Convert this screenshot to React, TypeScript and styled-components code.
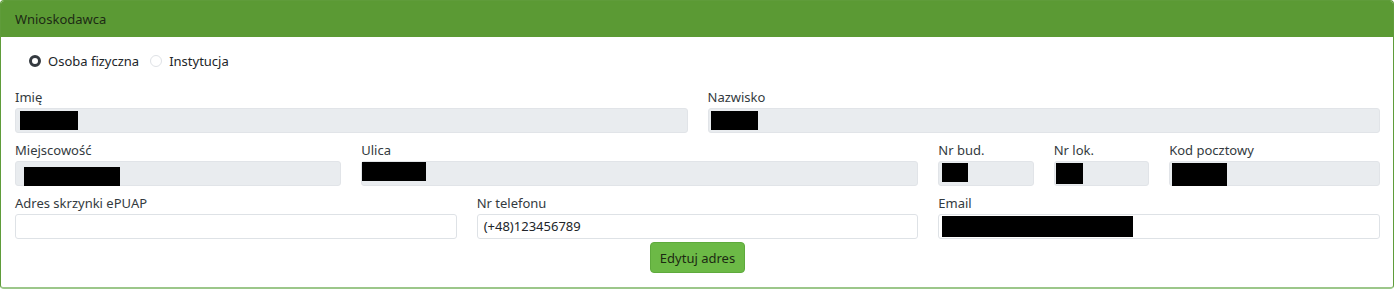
import styled, { createGlobalStyle } from "styled-components";

const GlobalStyle = createGlobalStyle`
  body {
    margin: 0;
    background: #ffffff;
    font-family: "Noto Sans", "Open Sans", sans-serif;
    font-size: 13px;
    color: #212529;
  }
`;

const Card = styled.section`
  width: 1394px;
  height: 289px;
  box-sizing: border-box;
  border: 1px solid #5f9c3a;
  border-bottom: 2px solid #9cc78a;
  border-radius: 4px;
  overflow: hidden;
  display: flex;
  flex-direction: column;
`;

const Header = styled.div`
  height: 36px;
  box-sizing: border-box;
  background: #5b9a34;
  padding: 0 14px;
  display: flex;
  align-items: center;
  color: #1d2a14;
  font-size: 13px;
`;

const Body = styled.div`
  padding: 13px 13px 0 14px;
  display: flex;
  flex-direction: column;
`;

const RadioRow = styled.div`
  display: flex;
  align-items: center;
  gap: 11px;
  padding-left: 14px;
  height: 22px;
  margin-bottom: 17px;
`;

const RadioOption = styled.label`
  display: flex;
  align-items: center;
  gap: 7px;
  color: #212529;
`;

const RadioDot = styled.span<{ $checked: boolean }>`
  width: 12px;
  height: 12px;
  box-sizing: border-box;
  border-radius: 50%;
  border: ${(p) => (p.$checked ? "3.5px solid #343a40" : "1px solid #dfe2e6")};
  background: #fff;
`;

const Grid = styled.div`
  display: grid;
  grid-template-columns: repeat(12, 1fr);
  column-gap: 20px;
  row-gap: 9px;
`;

const Field = styled.div<{ $span: number }>`
  grid-column: span ${(p) => p.$span};
  display: flex;
  flex-direction: column;
`;

const Label = styled.div`
  height: 19px;
  line-height: 17px;
  color: #333a40;
`;

const Input = styled.div<{ $readonly?: boolean }>`
  height: 25px;
  box-sizing: border-box;
  border: 1px solid ${(p) => (p.$readonly ? "#e1e4e8" : "#dee2e6")};
  border-radius: 3px;
  background: ${(p) => (p.$readonly ? "#e9ecef" : "#ffffff")};
  display: flex;
  align-items: flex-start;
  padding: 0 6px;
  line-height: 23px;
  color: #212529;
  position: relative;
`;

const Redacted = styled.span<{ $x: number; $y: number; $w: number; $h: number }>`
  position: absolute;
  left: ${(p) => p.$x}px;
  top: ${(p) => p.$y}px;
  width: ${(p) => p.$w}px;
  height: ${(p) => p.$h}px;
  background: #000;
`;

const ButtonRow = styled.div`
  display: flex;
  justify-content: center;
  margin-top: 3px;
`;

const Button = styled.button`
  width: 95px;
  height: 31px;
  border: 1px solid #5eaa3c;
  border-radius: 4px;
  background: #6cb946;
  color: #1c2a12;
  font-family: inherit;
  font-size: 13px;
  padding: 0;
`;

type Box = { x: number; y: number; w: number; h: number };

const fields: {
  label: string;
  span: number;
  readonly?: boolean;
  value?: string;
  box?: Box;
}[] = [
  { label: "Imię", span: 6, readonly: true, box: { x: 4, y: 2, w: 58, h: 19 } },
  { label: "Nazwisko", span: 6, readonly: true, box: { x: 2, y: 2, w: 47, h: 19 } },
  { label: "Miejscowość", span: 3, readonly: true, box: { x: 8, y: 5, w: 96, h: 19 } },
  { label: "Ulica", span: 5, readonly: true, box: { x: 0, y: 0, w: 64, h: 19 } },
  { label: "Nr bud.", span: 1, readonly: true, box: { x: 3, y: 1, w: 26, h: 19 } },
  { label: "Nr lok.", span: 1, readonly: true, box: { x: 1, y: 1, w: 27, h: 21 } },
  { label: "Kod pocztowy", span: 2, readonly: true, box: { x: 2, y: 1, w: 55, h: 23 } },
  { label: "Adres skrzynki ePUAP", span: 4 },
  { label: "Nr telefonu", span: 4, value: "(+48)123456789" },
  { label: "Email", span: 4, box: { x: 3, y: 1, w: 191, h: 21 } },
];

export default function App() {
  return (
    <>
      <GlobalStyle />
      <Card>
        <Header>Wnioskodawca</Header>
        <Body>
          <RadioRow>
            <RadioOption>
              <RadioDot $checked />
              Osoba fizyczna
            </RadioOption>
            <RadioOption>
              <RadioDot $checked={false} />
              Instytucja
            </RadioOption>
          </RadioRow>

          <Grid>
            {fields.map((f) => (
              <Field key={f.label} $span={f.span}>
                <Label>{f.label}</Label>
                <Input $readonly={f.readonly}>
                  {f.value}
                  {f.box && (
                    <Redacted $x={f.box.x} $y={f.box.y} $w={f.box.w} $h={f.box.h} />
                  )}
                </Input>
              </Field>
            ))}
          </Grid>

          <ButtonRow>
            <Button>Edytuj adres</Button>
          </ButtonRow>
        </Body>
      </Card>
    </>
  );
}
